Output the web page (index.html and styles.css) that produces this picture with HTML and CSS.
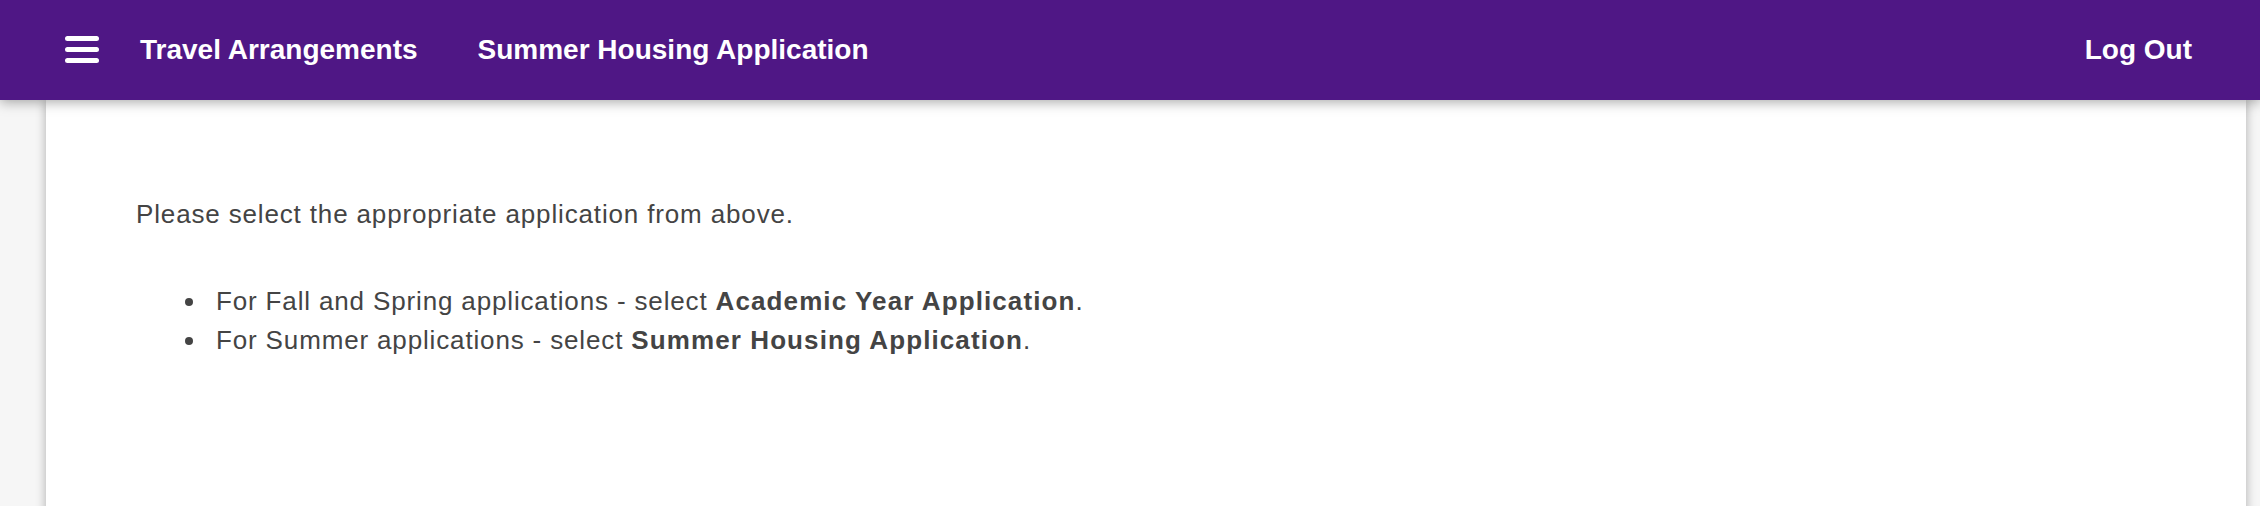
FILE: index.html
```html
<!DOCTYPE html>
<html lang="en">
<head>
<meta charset="utf-8">
<title>Housing</title>
<link rel="stylesheet" href="styles.css">
</head>
<body>
<header class="topbar">
  <button class="menu-btn" aria-label="Menu">
    <svg width="34" height="28" viewBox="0 0 34 28"><rect x="0" y="0" width="34" height="5" rx="2.5" fill="#fff"/><rect x="0" y="11" width="34" height="5" rx="2.5" fill="#fff"/><rect x="0" y="22" width="34" height="5" rx="2.5" fill="#fff"/></svg>
  </button>
  <nav class="nav">
    <a class="nav-link" href="#">Travel Arrangements</a>
    <a class="nav-link" href="#">Summer Housing Application</a>
  </nav>
  <a class="nav-link logout" href="#">Log Out</a>
</header>
<main class="card">
  <p class="intro">Please select the appropriate application from above.</p>
  <ul class="choices">
    <li>For Fall and Spring applications - select <strong>Academic Year Application</strong>.</li>
    <li>For Summer applications - select <strong>Summer Housing Application</strong>.</li>
  </ul>
</main>
</body>
</html>
```
FILE: styles.css
```css
html, body {
  margin: 0;
  padding: 0;
  height: 100%;
}
body {
  background: #f6f6f6;
  font-family: "Liberation Sans", Arial, Helvetica, sans-serif;
  color: #444;
  overflow: hidden;
}
.topbar {
  position: relative;
  z-index: 2;
  height: 100px;
  background: #4f1785;
  display: flex;
  align-items: center;
  padding: 0 68px 0 65px;
  box-shadow: 0 2px 12px rgba(0,0,0,0.35);
}
.menu-btn {
  background: none;
  border: 0;
  padding: 0;
  margin: 0 41px 0 0;
  display: flex;
  cursor: pointer;
}
.nav {
  display: flex;
  gap: 60px;
  flex: 1;
}
.nav-link {
  color: #fff;
  text-decoration: none;
  font-weight: bold;
  font-size: 28px;
}
.card {
  background: #fff;
  margin-left: 46px;
  width: 2200px;
  min-height: 420px;
  box-sizing: border-box;
  padding: 95px 90px 0 90px;
  box-shadow: 0 0 10px rgba(0,0,0,0.3);
}
.intro {
  margin: 0;
  font-size: 26px;
  line-height: 39px;
  letter-spacing: 0.85px;
}
.choices {
  margin: 48px 0 0 0;
  padding-left: 72px;
  font-size: 26px;
  line-height: 39px;
  letter-spacing: 0.85px;
}
.choices li {
  padding-left: 8px;
}
.choices strong {
  font-weight: bold;
  letter-spacing: 1.1px;
}
```
